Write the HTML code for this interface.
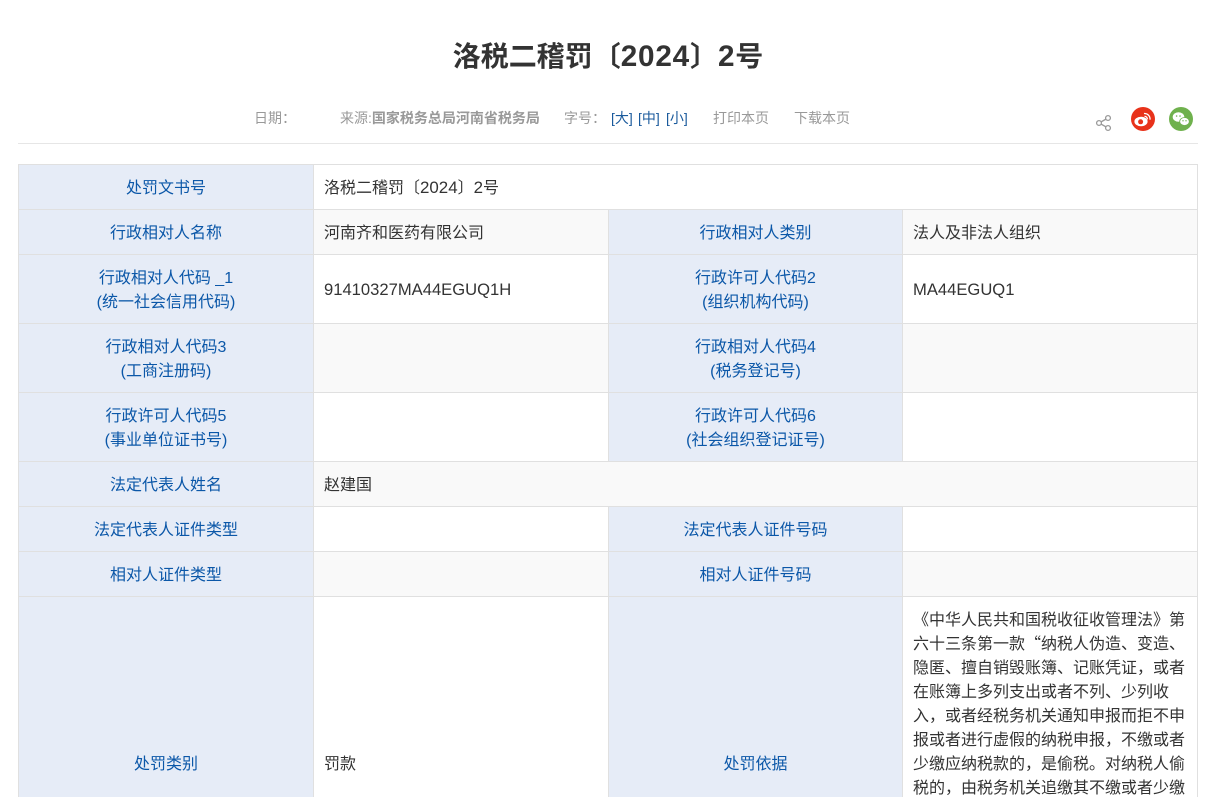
<!DOCTYPE html>
<html lang="zh-CN"><head><meta charset="utf-8"><style>
html{margin:0;padding:0;background:#fff;width:1216px;height:797px;overflow:hidden}
body{margin:0;padding:0;background:#fff;width:1216px;height:797px;overflow:hidden;position:relative;font-family:"Liberation Sans","Noto Sans CJK SC",sans-serif}
div,svg{position:absolute}
.c{box-sizing:border-box;border-right:1px solid #e0e0e0;border-bottom:1px solid #e0e0e0;font-size:16px;line-height:24px;display:flex;align-items:center;overflow:hidden;padding-top:4px}
.l{background:#e6ecf7;color:#0b57a8;justify-content:center;text-align:center}
.v{color:#333;padding-left:10px;padding-right:10px}
.g{background:#f9f9f9}
.m{font-size:14px;color:#999;top:108px;line-height:20px;white-space:nowrap}
.b{color:#1a5a9c}
.n{font-size:16.6px;padding-top:2px}
.q{font-family:"Noto Sans CJK SC",sans-serif;line-height:0}
.t{font-size:29.7px;letter-spacing:.8px}
.u{font-size:16.9px}
.e{height:200px;border-bottom:0;padding-top:0;align-items:flex-start}
.e span{position:relative;top:156px}
</style></head><body>
<div style="left:0;width:1216px;top:35px;text-align:center;font-size:28px;line-height:44px;font-weight:bold;color:#333;white-space:nowrap">洛税二稽罚〔<span class="t">2024</span>〕<span class="t">2</span>号</div>
<div class="m" style="left:254px">日期：</div>
<div class="m" style="left:340px">来源:<b>国家税务总局河南省税务局</b></div>
<div class="m" style="left:564px">字号：</div>
<div class="m b" style="left:611px">[大]</div>
<div class="m b" style="left:638px">[中]</div>
<div class="m b" style="left:666px">[小]</div>
<div class="m" style="left:713px">打印本页</div>
<div class="m" style="left:794px">下载本页</div>
<svg style="left:1095px;top:114px" width="18" height="18" viewBox="0 0 18 18"><path d="M13 4 4 9l9 5" fill="none" stroke="#999" stroke-width="1.3"/><circle cx="13" cy="4" r="2.4" fill="#fff" stroke="#999" stroke-width="1.3"/><circle cx="4" cy="9" r="2.4" fill="#fff" stroke="#999" stroke-width="1.3"/><circle cx="13" cy="14" r="2.4" fill="#fff" stroke="#999" stroke-width="1.3"/></svg>
<svg style="left:1131px;top:107px" width="24" height="24" viewBox="0 0 24 24"><circle cx="12" cy="12" r="12" fill="#e8321a"/><ellipse cx="10" cy="14.5" rx="6.6" ry="4.8" fill="#fff"/><circle cx="9.6" cy="14.8" r="2.5" fill="#e8321a"/><path d="M13 6.5a5.5 5.5 0 0 1 6 6.2M13.5 9.4a2.6 2.6 0 0 1 2.8 3" fill="none" stroke="#fff" stroke-width="1.3"/></svg>
<svg style="left:1169px;top:107px" width="24" height="24" viewBox="0 0 24 24"><circle cx="12" cy="12" r="12" fill="#6fb14d"/><ellipse cx="9.5" cy="10" rx="5.8" ry="4.8" fill="#fff"/><ellipse cx="15.5" cy="14.5" rx="4.8" ry="4" fill="#fff" stroke="#6fb14d" stroke-width=".8"/><circle cx="7.6" cy="9" r=".8" fill="#6fb14d"/><circle cx="11" cy="9" r=".8" fill="#6fb14d"/><circle cx="14" cy="13.8" r=".7" fill="#6fb14d"/><circle cx="17" cy="13.8" r=".7" fill="#6fb14d"/></svg>
<div style="left:18px;top:143px;width:1180px;height:1px;background:#e6e6e6"></div>
<div style="left:18px;top:164px;width:1180px;height:1px;background:#e0e0e0"></div>
<div style="left:18px;top:165px;width:1px;height:632px;background:#e0e0e0"></div>

<div class="c l" style="left:19px;top:165px;width:295px;height:45px">处罚文书号</div>
<div class="c v" style="left:314px;top:165px;width:884px;height:45px;padding-top:2px"><span>洛税二稽罚〔<span class="u">2024</span>〕<span class="u">2</span>号</span></div>

<div class="c l" style="left:19px;top:210px;width:295px;height:45px">行政相对人名称</div>
<div class="c v g" style="left:314px;top:210px;width:295px;height:45px">河南齐和医药有限公司</div>
<div class="c l" style="left:609px;top:210px;width:294px;height:45px">行政相对人类别</div>
<div class="c v g" style="left:903px;top:210px;width:295px;height:45px">法人及非法人组织</div>

<div class="c l" style="left:19px;top:255px;width:295px;height:69px"><span>行政相对人代码 _1<br>(统一社会信用代码)</span></div>
<div class="c v n" style="left:314px;top:255px;width:295px;height:69px">91410327MA44EGUQ1H</div>
<div class="c l" style="left:609px;top:255px;width:294px;height:69px"><span>行政许可人代码2<br>(组织机构代码)</span></div>
<div class="c v n" style="left:903px;top:255px;width:295px;height:69px">MA44EGUQ1</div>

<div class="c l" style="left:19px;top:324px;width:295px;height:69px"><span>行政相对人代码3<br>(工商注册码)</span></div>
<div class="c v g" style="left:314px;top:324px;width:295px;height:69px"></div>
<div class="c l" style="left:609px;top:324px;width:294px;height:69px"><span>行政相对人代码4<br>(税务登记号)</span></div>
<div class="c v g" style="left:903px;top:324px;width:295px;height:69px"></div>

<div class="c l" style="left:19px;top:393px;width:295px;height:69px"><span>行政许可人代码5<br>(事业单位证书号)</span></div>
<div class="c v" style="left:314px;top:393px;width:295px;height:69px"></div>
<div class="c l" style="left:609px;top:393px;width:294px;height:69px"><span>行政许可人代码6<br>(社会组织登记证号)</span></div>
<div class="c v" style="left:903px;top:393px;width:295px;height:69px"></div>

<div class="c l" style="left:19px;top:462px;width:295px;height:45px">法定代表人姓名</div>
<div class="c v g" style="left:314px;top:462px;width:884px;height:45px">赵建国</div>

<div class="c l" style="left:19px;top:507px;width:295px;height:45px">法定代表人证件类型</div>
<div class="c v" style="left:314px;top:507px;width:295px;height:45px"></div>
<div class="c l" style="left:609px;top:507px;width:294px;height:45px">法定代表人证件号码</div>
<div class="c v" style="left:903px;top:507px;width:295px;height:45px"></div>

<div class="c l" style="left:19px;top:552px;width:295px;height:45px">相对人证件类型</div>
<div class="c v g" style="left:314px;top:552px;width:295px;height:45px"></div>
<div class="c l" style="left:609px;top:552px;width:294px;height:45px">相对人证件号码</div>
<div class="c v g" style="left:903px;top:552px;width:295px;height:45px"></div>

<div class="c l e" style="left:19px;top:597px;width:295px"><span>处罚类别</span></div>
<div class="c v e" style="left:314px;top:597px;width:295px"><span>罚款</span></div>
<div class="c l e" style="left:609px;top:597px;width:294px"><span>处罚依据</span></div>
<div class="c" style="left:903px;top:597px;width:295px;height:200px;display:block;color:#333;padding:0;border-bottom:0"><div style="left:10px;top:12px;width:280px;height:188px;overflow:hidden;white-space:nowrap">《中华人民共和国税收征收管理法》第<br>六十三条第一款<span class="q">“</span>纳税人伪造、变造、<br>隐匿、擅自销毁账簿、记账凭证，或者<br>在账簿上多列支出或者不列、少列收<br>入，或者经税务机关通知申报而拒不申<br>报或者进行虚假的纳税申报，不缴或者<br>少缴应纳税款的，是偷税。对纳税人偷<br>税的，由税务机关追缴其不缴或者少缴</div></div>
</body></html>
